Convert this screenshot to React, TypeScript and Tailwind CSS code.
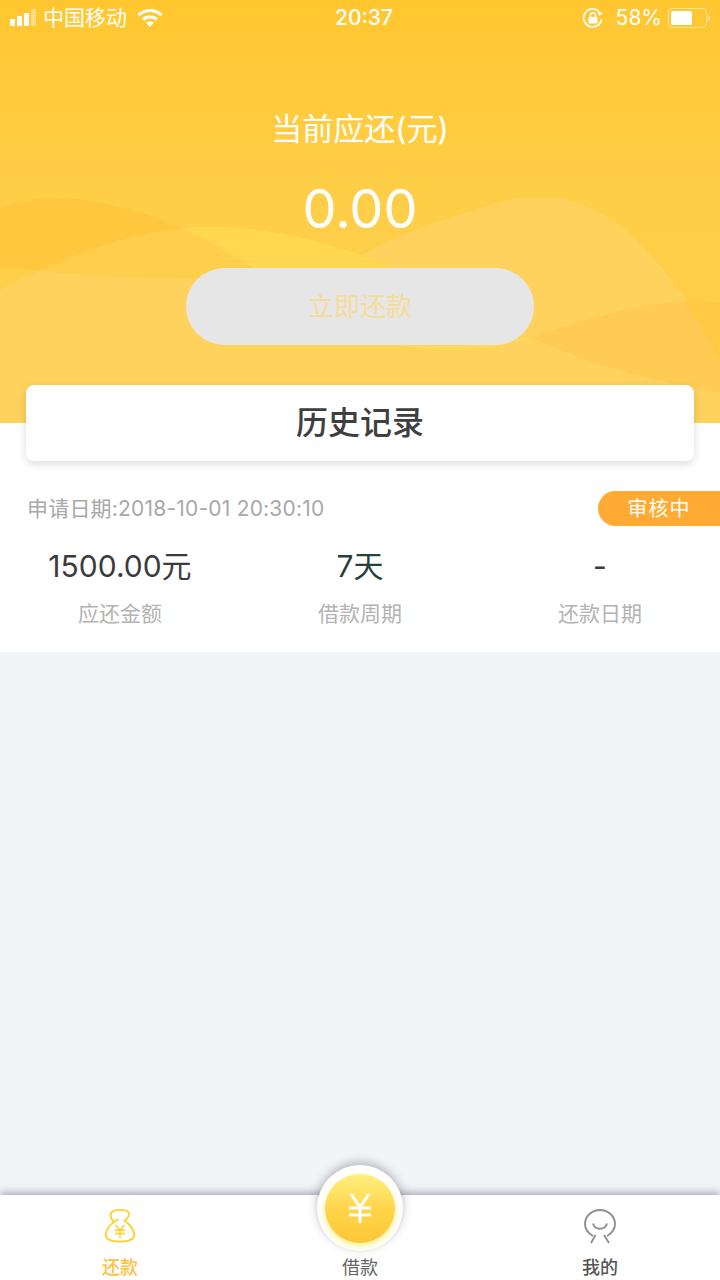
import React from "react";

const FONT = "font-['Inter','Noto_Sans_CJK_SC',sans-serif]";

const WAVE2 =
  "M0 290C40 270 110 232 200 227C260 225 320 240 375 260C420 280 480 315 530 337C590 365 660 382 720 393L720 423L0 423Z";
const DARK =
  "M0 208C20 201 40 198 60 198C100 199 145 212 180 228C215 244 240 258 262 275L262 282L190 279C150 278 90 276 55 272C35 270 15 268 0 267Z";

function Waves() {
  return (
    <svg className="absolute inset-0" width="720" height="423" viewBox="0 0 720 423" aria-hidden="true">
      <defs>
        <linearGradient id="bg" x1="0" y1="0" x2="0" y2="1">
          <stop offset="0" stopColor="#ffc62f" />
          <stop offset="0.42" stopColor="#ffce47" />
          <stop offset="1" stopColor="#ffd04e" />
        </linearGradient>
        <clipPath id="w2">
          <path d={WAVE2} />
        </clipPath>
      </defs>
      <rect width="720" height="423" fill="url(#bg)" />
      <path d={DARK} fill="#ffc73d" />
      <path d={WAVE2} fill="#ffd25e" />
      <path d="M360 257C385 238 440 222 500 202C520 197 535 198 550 198C575 199 600 210 620 226C650 250 680 290 700 320C708 335 715 350 720 362L720 423L360 423Z" fill="#ffd25e" />
      <g clipPath="url(#w2)">
        <rect x="180" y="215" width="240" height="60" fill="#ffd850" />
        <path d={DARK} fill="#ffce4a" />
      </g>
      <path d="M400 345C440 353 490 352 530 337C490 345 440 347 400 345Z" fill="#ffd85f" />
      <path d="M530 337C580 322 640 302 690 301C702 301 712 302 720 303L720 393C650 380 590 365 530 337Z" fill="#ffcb53" />
      <path d="M684 302C696 318 710 340 720 362L720 303C712 302 700 301 684 302Z" fill="#ffc943" />
    </svg>
  );
}

function StatusBar() {
  return (
    <div className="relative h-[36px] flex items-center text-white text-[21px] px-[10px]">
      <div className="flex items-end gap-[2px] h-[16px] mr-[7px]">
        <span className="w-[5px] h-[7px] rounded-[1px] bg-white" />
        <span className="w-[5px] h-[10px] rounded-[1px] bg-white" />
        <span className="w-[5px] h-[13px] rounded-[1px] bg-white" />
        <span className="w-[5px] h-[17px] rounded-[1px] bg-white/40" />
      </div>
      <span>中国移动</span>
      <svg className="ml-[10px] -mt-[2px]" width="26" height="19" viewBox="0 0 26 19" fill="none" stroke="#fff" strokeWidth="3.2">
        <path d="M1.5 7C8.5 1 17.5 1 24.5 7" />
        <path d="M6 11.5C10 8 16 8 20 11.5" />
        <path d="M13 19L9 14.6C11.2 13.2 14.8 13.2 17 14.6Z" fill="#fff" stroke="none" />
      </svg>
      <span className="absolute left-[8px] right-0 text-center text-[21px] font-medium">20:37</span>
      <div className="ml-auto flex items-center">
        <svg width="22" height="22" viewBox="0 0 22 22" fill="none" stroke="#fff" strokeWidth="1.7">
          <path d="M19.5 12.5A9 9 0 1 1 17 4.5" />
          <path d="M21 6L17 9L15.5 4.5Z" fill="#fff" stroke="none" />
          <rect x="6.5" y="10" width="9" height="6.5" rx="1" fill="#fff" stroke="none" />
          <path d="M8.5 10V8.3a2.5 2.5 0 0 1 5 0V10" strokeWidth="1.4" />
        </svg>
        <span className="ml-[12px]">58%</span>
        <div className="ml-[6px] w-[39px] h-[20px] rounded-[4px] border border-white/50 p-[2px]">
          <div className="w-[21px] h-full rounded-[2px] bg-white" />
        </div>
        <div className="ml-[1px] w-[2px] h-[6px] rounded-r-[2px] bg-white/50" />
      </div>
    </div>
  );
}

function Stat({ value, label, valueClass }: { value: string; label: string; valueClass: string }) {
  return (
    <div className="flex-1 flex flex-col items-center">
      <span className={`h-[42px] leading-[42px] text-[30px] ${valueClass}`}>{value}</span>
      <span className="mt-[12px] h-[30px] leading-[30px] text-[21px] text-[#b3b3b3]">{label}</span>
    </div>
  );
}

export default function App() {
  return (
    <div className={`${FONT} relative w-[720px] h-[1280px] overflow-hidden flex flex-col bg-[#f1f5f8]`}>
      <header className="relative h-[423px] shrink-0">
        <Waves />
        <StatusBar />
        <div className="relative flex flex-col items-center">
          <p className="mt-[73px] h-[40px] leading-[40px] text-[31px] text-white">当前应还(元)</p>
          <p className="mt-[29px] h-[62px] leading-[62px] text-[54px] text-white">0.00</p>
          <div className="mt-[28px] w-[348px] h-[77px] rounded-full bg-[#e6e6e6] flex items-center justify-center text-[26px] text-[#f6dc9a]">
            立即还款
          </div>
        </div>
      </header>

      <section className="bg-white h-[229px] shrink-0 flex flex-col">
        <div className="relative -mt-[38px] mx-[26px] h-[76px] shrink-0 rounded-[8px] bg-white shadow-[0_3px_8px_rgba(0,0,0,0.14)] flex items-center justify-center text-[32px] font-medium text-[#3f3f3f]">
          历史记录
        </div>
        <div className="mt-[30px] flex items-center justify-between pl-[27px]">
          <span className="text-[21px] tracking-[0.2px] text-[#a8a8a8]">申请日期:2018-10-01 20:30:10</span>
          <span className="w-[122px] h-[35px] rounded-l-full bg-[#ffab33] text-white text-[20px] tracking-[1px] flex items-center justify-center">
            审核中
          </span>
        </div>
        <div className="mt-[19px] flex">
          <Stat value="1500.00元" label="应还金额" valueClass="text-[#3b3b3b]" />
          <Stat value="7天" label="借款周期" valueClass="text-[#27403c]" />
          <Stat value="-" label="还款日期" valueClass="text-[#3b3b3b]" />
        </div>
      </section>

      <nav className="relative mt-auto h-[85px] shrink-0 bg-white flex shadow-[0_-2px_8px_rgba(60,60,70,0.45)]">
        <div className="flex-1 flex flex-col items-center">
          <svg className="mt-[13px]" width="34" height="38" viewBox="0 0 34 38" fill="none" stroke="#fed22d" strokeWidth="2">
            <path d="M10 14C6 10 6 5 10 3C14 1.5 22 1.5 25 3.5C28 6 26 10 22 13.5C27 17 32 23 32 28C32 33 27 35.5 17 35.5C7 35.5 2 33 2 28C2 23 7 17 11.5 14C13 13 15 12 16 12" />
            <path d="M12.5 18L17 23.5L21.5 18M11.5 23.5H22.5M11.5 27H22.5M17 23.5V32" strokeWidth="1.6" />
          </svg>
          <span className="mt-[12px] text-[18px] leading-[24px] font-medium text-[#fdc13f]">还款</span>
        </div>
        <div className="flex-1 flex flex-col items-center justify-end">
          <span className="text-[18px] leading-[24px] text-[#666666]">借款</span>
        </div>
        <div className="flex-1 flex flex-col items-center">
          <svg className="mt-[14px]" width="32" height="36" viewBox="0 0 32 36" fill="none" stroke="#8e8e8e" strokeWidth="1.9">
            <path d="M9 27C4 24 1 20 1 15C1 7 8 1 16 1C24 1 31 7 31 15C31 20 28 24 23 27" />
            <path d="M11.5 26L7 34M20 26L25 34" />
            <path d="M9 14.5C11 21.5 21 21.5 23 14.5" />
          </svg>
          <span className="mt-[11px] text-[18px] leading-[24px] font-medium text-[#555555]">我的</span>
        </div>

        <div className="absolute left-[317px] -top-[30px] w-[86px] h-[86px] rounded-full bg-white shadow-[0_-3px_10px_rgba(60,60,70,0.35)] flex items-center justify-center">
          <div className="w-[70px] h-[69px] rounded-full bg-gradient-to-b from-[#fff07f] via-[#ffd54a] to-[#fdc736] shadow-[0_3px_6px_#fff389] flex items-center justify-center">
            <svg width="22" height="30" viewBox="0 0 22 30" fill="none" stroke="#fff" strokeWidth="3">
              <path d="M2 1L11 14L20 1M0 15H22M0 22H22M11 14V30" />
            </svg>
          </div>
        </div>
      </nav>
    </div>
  );
}
